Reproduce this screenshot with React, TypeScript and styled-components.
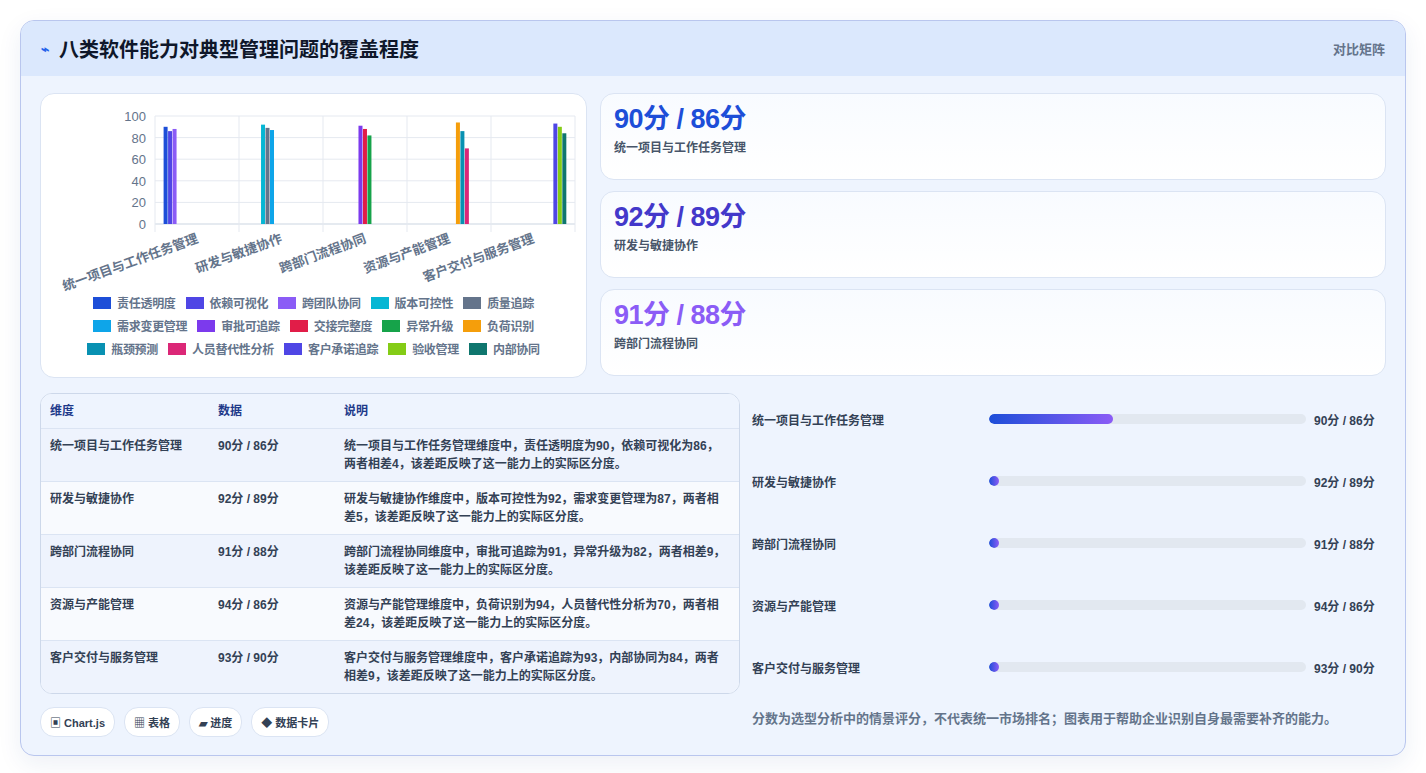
import React from "react";
import styled, { createGlobalStyle } from "styled-components";

const Global = createGlobalStyle`
  html, body { margin: 0; padding: 0; background: #ffffff; }
  body { font-family: "Liberation Sans", "Noto Sans CJK SC", sans-serif; color: #1e293b; }
`;

const Page = styled.div`
  padding: 20px;
  width: 1426px;
  box-sizing: border-box;
`;

const Card = styled.div`
  border: 1px solid #b9c6ee;
  border-radius: 14px;
  background: #eef4fe;
  overflow: hidden;
  box-shadow: 0 8px 24px rgba(30, 58, 138, 0.08);
`;

const Header = styled.div`
  height: 55px;
  background: #dbe8fd;
  display: flex;
  align-items: center;
  justify-content: space-between;
  padding: 0 20px;
`;

const Title = styled.h1`
  margin: 0;
  font-size: 20px;
  font-weight: 700;
  color: #0f172a;
  display: flex;
  align-items: center;
  gap: 10px;
`;

const Bolt = styled.span`
  color: #2563eb;
  font-size: 14px;
`;

const HeaderTag = styled.span`
  font-size: 13px;
  font-weight: 700;
  color: #64748b;
`;

const Body = styled.div`
  padding: 17px 19px 18px 19px;
  display: flex;
  flex-direction: column;
  gap: 15px;
`;

const TopRow = styled.div`
  display: grid;
  grid-template-columns: 547px 1fr;
  column-gap: 13px;
`;

const BottomRow = styled.div`
  display: grid;
  grid-template-columns: 700px 1fr;
  column-gap: 12px;
`;

const Panel = styled.div`
  background: #ffffff;
  border: 1px solid #dbe4f3;
  border-radius: 14px;
`;

const ChartPanel = styled(Panel)`
  height: 285px;
  box-sizing: border-box;
  padding-top: 6px;
`;

const Legend = styled.div`
  display: flex;
  flex-wrap: wrap;
  justify-content: center;
  gap: 6px 10px;
  width: 500px;
  margin: 2px auto 0 auto;
`;

const LegendItem = styled.span`
  display: inline-flex;
  align-items: center;
  gap: 6px;
  font-size: 12px;
  font-weight: 700;
  color: #64748b;
  letter-spacing: -0.3px;
`;

const Swatch = styled.span<{ $c: string }>`
  width: 18px;
  height: 12px;
  background: ${(p) => p.$c};
  display: inline-block;
`;

const Stats = styled.div`
  display: flex;
  flex-direction: column;
  gap: 11px;
`;

const StatCard = styled(Panel)`
  height: 87px;
  box-sizing: border-box;
  padding: 9px 13px;
  background: linear-gradient(180deg, #f8fbff, #ffffff);
`;

const StatValue = styled.div<{ $c: string }>`
  font-size: 27px;
  font-weight: 700;
  letter-spacing: -0.5px;
  color: ${(p) => p.$c};
  line-height: 32px;
`;

const StatLabel = styled.div`
  font-size: 12px;
  font-weight: 700;
  color: #475569;
  margin-top: 3px;
`;

const Table = styled.div`
  border: 1px solid #cdd8ea;
  border-radius: 12px;
  overflow: hidden;
  background: #ffffff;
`;

const Row = styled.div<{ $alt?: boolean; $head?: boolean }>`
  display: grid;
  grid-template-columns: 168px 126px 1fr;
  padding: 8px 9px;
  min-height: ${(p) => (p.$head ? "18px" : "36px")};
  background: ${(p) => (p.$head ? "#eef4fe" : p.$alt ? "#f8fafe" : "#eef3fd")};
  border-top: ${(p) => (p.$head ? "none" : "1px solid #dbe4f3")};
  font-size: 12px;
  font-weight: 700;
  line-height: 18px;
  color: ${(p) => (p.$head ? "#1e3a8a" : "#334155")};
`;

const Cell = styled.div``;

const Progress = styled.div`
  display: flex;
  flex-direction: column;
  margin-top: -5px;
`;

const PRow = styled.div`
  display: grid;
  grid-template-columns: 237px 1fr 72px;
  align-items: center;
  height: 62px;
  font-size: 12px;
  font-weight: 700;
  color: #334155;
`;

const Track = styled.div`
  height: 10px;
  background: #e2e8f0;
  border-radius: 5px;
  margin-right: 8px;
  overflow: hidden;
`;

const Fill = styled.div`
  height: 100%;
  border-radius: 5px;
  min-width: 10px;
  background: linear-gradient(90deg, #1d4ed8, #8b5cf6);
`;

const PValue = styled.span``;

const Note = styled.div`
  font-size: 13px;
  font-weight: 700;
  color: #64748b;
  margin-top: 10px;
`;

const Chips = styled.div`
  display: flex;
  gap: 9px;
  margin-top: 13px;
`;

const Chip = styled.span`
  background: #ffffff;
  border: 1px solid #dbe4f3;
  border-radius: 14px;
  padding: 6px 9px;
  font-size: 11px;
  font-weight: 700;
  color: #334155;
`;

const series = [
  ["责任透明度", "#1d4ed8"], ["依赖可视化", "#4f46e5"], ["跨团队协同", "#8b5cf6"], ["版本可控性", "#06b6d4"], ["质量追踪", "#64748b"],
  ["需求变更管理", "#0ea5e9"], ["审批可追踪", "#7c3aed"], ["交接完整度", "#e11d48"], ["异常升级", "#16a34a"], ["负荷识别", "#f59e0b"],
  ["瓶颈预测", "#0891b2"], ["人员替代性分析", "#db2777"], ["客户承诺追踪", "#4f46e5"], ["验收管理", "#84cc16"], ["内部协同", "#0f766e"],
];
const values = [[90, 86, 88], [92, 89, 87], [91, 88, 82], [94, 86, 70], [93, 90, 84]];
const cats = ["统一项目与工作任务管理", "研发与敏捷协作", "跨部门流程协同", "资源与产能管理", "客户交付与服务管理"];

function Chart() {
  const ox = 114, top = 16, bottom = 124, gw = 84;
  const h = bottom - top;
  const bars: React.ReactNode[] = [];
  values.forEach((vs, g) => {
    vs.forEach((v, k) => {
      const i = g * 3 + k;
      const x = ox + gw * g + 8.4 + 4.48 * i + 0.2;
      bars.push(<rect key={i} x={x} y={bottom - (v / 100) * h} width={4} height={(v / 100) * h} fill={series[i][1]} />);
    });
  });
  return (
    <svg width="545" height="192" style={{ display: "block" }}>
      {[0, 20, 40, 60, 80, 100].map((t) => {
        const y = bottom - (t / 100) * h;
        return (
          <g key={t}>
            <line x1={ox} x2={ox + 5 * gw} y1={y} y2={y} stroke={t === 0 ? "#cbd5e1" : "#e5e9f0"} />
            <text x={ox - 9} y={y + 5} fontSize="13" fill="#64748b" textAnchor="end" fontFamily="Liberation Sans">{t}</text>
          </g>
        );
      })}
      {[0, 1, 2, 3, 4, 5].map((g) => (
        <line key={g} x1={ox + gw * g} x2={ox + gw * g} y1={top} y2={bottom + 8} stroke="#e5e9f0" />
      ))}
      {bars}
      {cats.map((c, g) => {
        const ex = ox + gw * g + gw / 2 + 2;
        const ey = bottom + 18;
        return (
          <text key={c} x={ex} y={ey} fontSize="13" fontWeight="700" fill="#64748b" textAnchor="end"
            transform={`rotate(-20 ${ex} ${ey})`}>{c}</text>
        );
      })}
    </svg>
  );
}

const rows = [
  ["统一项目与工作任务管理", "90分 / 86分", "统一项目与工作任务管理维度中，责任透明度为90，依赖可视化为86，两者相差4，该差距反映了这一能力上的实际区分度。", 39],
  ["研发与敏捷协作", "92分 / 89分", "研发与敏捷协作维度中，版本可控性为92，需求变更管理为87，两者相差5，该差距反映了这一能力上的实际区分度。", 0],
  ["跨部门流程协同", "91分 / 88分", "跨部门流程协同维度中，审批可追踪为91，异常升级为82，两者相差9，该差距反映了这一能力上的实际区分度。", 0],
  ["资源与产能管理", "94分 / 86分", "资源与产能管理维度中，负荷识别为94，人员替代性分析为70，两者相差24，该差距反映了这一能力上的实际区分度。", 0],
  ["客户交付与服务管理", "93分 / 90分", "客户交付与服务管理维度中，客户承诺追踪为93，内部协同为84，两者相差9，该差距反映了这一能力上的实际区分度。", 0],
] as const;

export default function App() {
  return (
    <Page>
      <Global />
      <Card>
        <Header>
          <Title><Bolt>⌁</Bolt>八类软件能力对典型管理问题的覆盖程度</Title>
          <HeaderTag>对比矩阵</HeaderTag>
        </Header>
        <Body>
          <TopRow>
            <ChartPanel>
              <Chart />
              <Legend>
                {series.map(([n, c]) => (
                  <LegendItem key={n}><Swatch $c={c} />{n}</LegendItem>
                ))}
              </Legend>
            </ChartPanel>
            <Stats>
              <StatCard><StatValue $c="#1d4ed8">90分 / 86分</StatValue><StatLabel>统一项目与工作任务管理</StatLabel></StatCard>
              <StatCard><StatValue $c="#4338ca">92分 / 89分</StatValue><StatLabel>研发与敏捷协作</StatLabel></StatCard>
              <StatCard><StatValue $c="#8b5cf6">91分 / 88分</StatValue><StatLabel>跨部门流程协同</StatLabel></StatCard>
            </Stats>
          </TopRow>
          <BottomRow>
            <div>
              <Table>
                <Row $head><Cell>维度</Cell><Cell>数据</Cell><Cell>说明</Cell></Row>
                {rows.map((r, i) => (
                  <Row key={r[0]} $alt={i % 2 === 1}><Cell>{r[0]}</Cell><Cell>{r[1]}</Cell><Cell>{r[2]}</Cell></Row>
                ))}
              </Table>
              <Chips>
                <Chip>▣ Chart.js</Chip>
                <Chip>▦ 表格</Chip>
                <Chip>▰ 进度</Chip>
                <Chip>◆ 数据卡片</Chip>
              </Chips>
            </div>
            <Progress>
              {rows.map((r) => (
                <PRow key={r[0]}>
                  <span>{r[0]}</span>
                  <Track><Fill style={{ width: `${r[3]}%` }} /></Track>
                  <PValue>{r[1]}</PValue>
                </PRow>
              ))}
              <Note>分数为选型分析中的情景评分，不代表统一市场排名；图表用于帮助企业识别自身最需要补齐的能力。</Note>
            </Progress>
          </BottomRow>
        </Body>
      </Card>
    </Page>
  );
}
